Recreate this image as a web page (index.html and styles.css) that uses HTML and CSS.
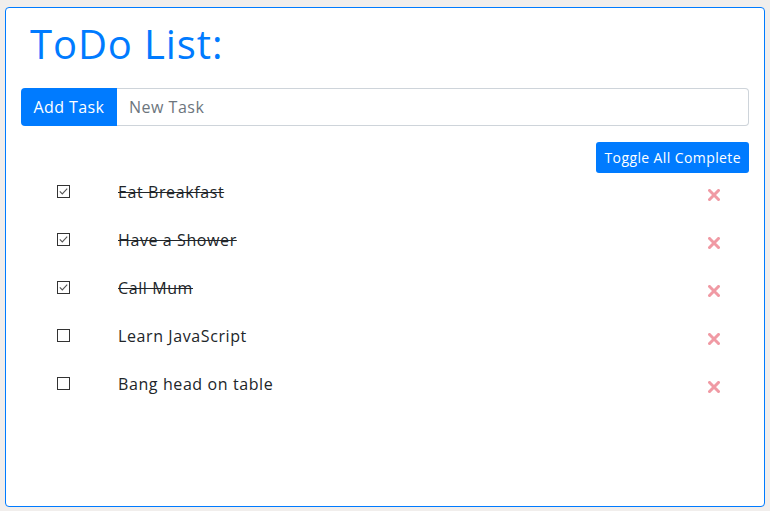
FILE: index.html
```html
<!DOCTYPE html>
<html>
<head>
<meta charset="utf-8">
<link rel="stylesheet" href="styles.css">
</head>
<body>
<div class="card">
  <h1 class="title">ToDo List:</h1>
  <div class="input-group">
    <button class="btn btn-add">Add Task</button>
    <input class="task-input" type="text" placeholder="New Task">
  </div>
  <div class="toolbar">
    <button class="btn btn-sm">Toggle All Complete</button>
  </div>
  <ul class="list">
    <li class="row done">
      <span class="cb"><svg class="box" width="13" height="13" viewBox="0 0 13 13"><rect x="0.5" y="0.5" width="12" height="12" fill="#fff" stroke="#333" stroke-width="1"/><path d="M2.8 6.4 L5.3 8.9 L10.2 3.6" fill="none" stroke="#555" stroke-width="1.1"/></svg></span>
      <span class="text">Eat Breakfast</span>
      <span class="del"><svg width="12" height="12" viewBox="0 0 12 12"><path d="M1.5 1.5 L10.5 10.5 M10.5 1.5 L1.5 10.5" stroke="#f09aa4" stroke-width="3" stroke-linecap="square"/></svg></span>
    </li>
    <li class="row done">
      <span class="cb"><svg class="box" width="13" height="13" viewBox="0 0 13 13"><rect x="0.5" y="0.5" width="12" height="12" fill="#fff" stroke="#333" stroke-width="1"/><path d="M2.8 6.4 L5.3 8.9 L10.2 3.6" fill="none" stroke="#555" stroke-width="1.1"/></svg></span>
      <span class="text">Have a Shower</span>
      <span class="del"><svg width="12" height="12" viewBox="0 0 12 12"><path d="M1.5 1.5 L10.5 10.5 M10.5 1.5 L1.5 10.5" stroke="#f09aa4" stroke-width="3" stroke-linecap="square"/></svg></span>
    </li>
    <li class="row done">
      <span class="cb"><svg class="box" width="13" height="13" viewBox="0 0 13 13"><rect x="0.5" y="0.5" width="12" height="12" fill="#fff" stroke="#333" stroke-width="1"/><path d="M2.8 6.4 L5.3 8.9 L10.2 3.6" fill="none" stroke="#555" stroke-width="1.1"/></svg></span>
      <span class="text">Call Mum</span>
      <span class="del"><svg width="12" height="12" viewBox="0 0 12 12"><path d="M1.5 1.5 L10.5 10.5 M10.5 1.5 L1.5 10.5" stroke="#f09aa4" stroke-width="3" stroke-linecap="square"/></svg></span>
    </li>
    <li class="row">
      <span class="cb"><svg class="box" width="13" height="13" viewBox="0 0 13 13"><rect x="0.5" y="0.5" width="12" height="12" fill="#fff" stroke="#333" stroke-width="1"/></svg></span>
      <span class="text">Learn JavaScript</span>
      <span class="del"><svg width="12" height="12" viewBox="0 0 12 12"><path d="M1.5 1.5 L10.5 10.5 M10.5 1.5 L1.5 10.5" stroke="#f09aa4" stroke-width="3" stroke-linecap="square"/></svg></span>
    </li>
    <li class="row">
      <span class="cb"><svg class="box" width="13" height="13" viewBox="0 0 13 13"><rect x="0.5" y="0.5" width="12" height="12" fill="#fff" stroke="#333" stroke-width="1"/></svg></span>
      <span class="text">Bang head on table</span>
      <span class="del"><svg width="12" height="12" viewBox="0 0 12 12"><path d="M1.5 1.5 L10.5 10.5 M10.5 1.5 L1.5 10.5" stroke="#f09aa4" stroke-width="3" stroke-linecap="square"/></svg></span>
    </li>
  </ul>
</div>
</body>
</html>
```
FILE: styles.css
```css
html, body {
  margin: 0;
  padding: 0;
  background: #f1eeec;
}
body {
  padding: 7px 5px 4px 5px;
  font-family: "Open Sans", "Liberation Sans", sans-serif;
  color: #212529;
}
.card {
  box-sizing: border-box;
  width: 760px;
  height: 500px;
  background: #fff;
  border: 1px solid #007bff;
  border-radius: 4px;
  padding: 15px;
}
.title {
  margin: 0 0 23px 9px;
  font-weight: 400;
  font-size: 40px;
  line-height: 42px;
  letter-spacing: 0.9px;
  color: #007bff;
}
.input-group {
  display: flex;
  height: 38px;
}
.btn {
  font-family: inherit;
  background: #007bff;
  color: #fff;
  border: none;
  cursor: pointer;
  letter-spacing: 0.4px;
}
.btn-add {
  width: 96px;
  font-size: 16px;
  border-radius: 4px 0 0 4px;
  padding: 0;
}
.task-input {
  flex: 1;
  box-sizing: border-box;
  height: 38px;
  border: 1px solid #ced4da;
  border-left: none;
  border-radius: 0 4px 4px 0;
  padding: 0 12px;
  font-family: inherit;
  font-size: 16px;
  letter-spacing: 0.5px;
  color: #495057;
}
.task-input::placeholder {
  color: #6c757d;
}
.toolbar {
  display: flex;
  justify-content: flex-end;
  margin-top: 16px;
}
.btn-sm {
  height: 31px;
  padding: 0 8px;
  font-size: 14px;
  border-radius: 3px;
}
.list {
  list-style: none;
  margin: -5px 0 0 0;
  padding: 0;
}
.row {
  display: flex;
  align-items: center;
  height: 48px;
}
.cb {
  width: 97px;
  display: flex;
  padding-left: 36px;
  box-sizing: border-box;
}
.box {
  display: block;
  margin-top: -2px;
}
.text {
  flex: 1;
  font-size: 16px;
  letter-spacing: 0.6px;
}
.done .text {
  text-decoration: line-through;
}
.del {
  width: 41px;
  display: flex;
  padding-top: 6px;
}
.del svg {
  display: block;
}
```
